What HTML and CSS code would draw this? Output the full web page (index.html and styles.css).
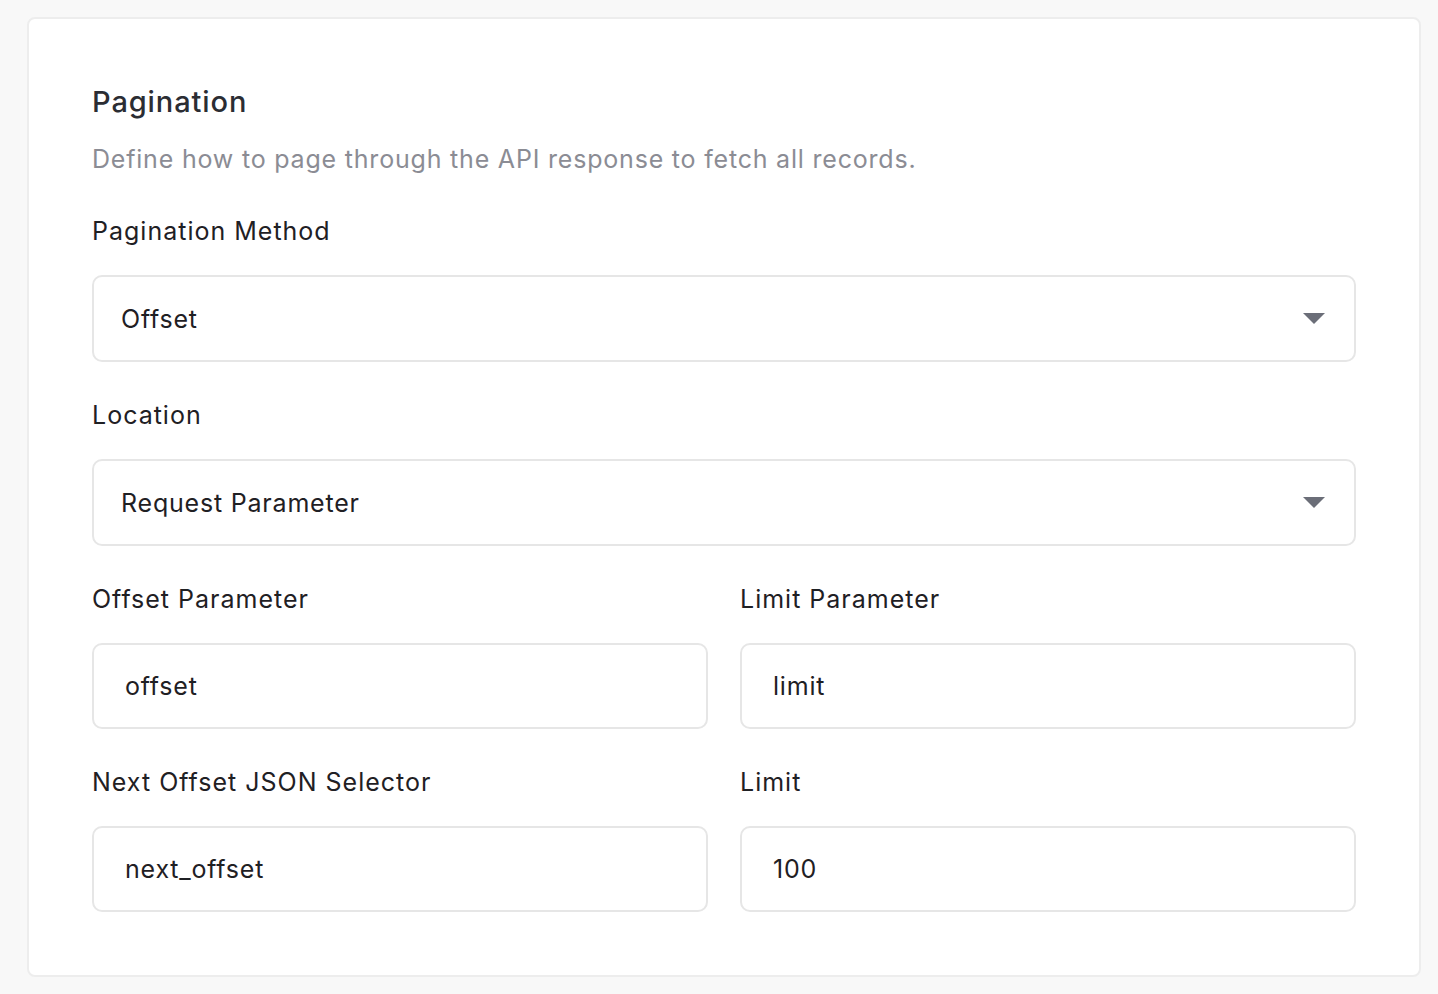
FILE: index.html
```html
<!DOCTYPE html>
<html lang="en">
<head>
<meta charset="utf-8">
<title>Pagination</title>
<link rel="stylesheet" href="styles.css">
</head>
<body>
<div class="page">
  <section class="card">
    <h2 class="title">Pagination</h2>
    <p class="desc">Define how to page through the API response to fetch all records.</p>

    <div class="fields">
      <div class="field">
        <label class="label">Pagination Method</label>
        <div class="select">
          <span class="select-value">Offset</span>
          <svg class="caret" width="22" height="11" viewBox="0 0 22 11"><path d="M0 0 H22 L11 11 Z" fill="#6b6e78"/></svg>
        </div>
      </div>

      <div class="field">
        <label class="label">Location</label>
        <div class="select">
          <span class="select-value">Request Parameter</span>
          <svg class="caret" width="22" height="11" viewBox="0 0 22 11"><path d="M0 0 H22 L11 11 Z" fill="#6b6e78"/></svg>
        </div>
      </div>

      <div class="row">
        <div class="field">
          <label class="label">Offset Parameter</label>
          <input class="input" type="text" value="offset" readonly>
        </div>
        <div class="field">
          <label class="label">Limit Parameter</label>
          <input class="input" type="text" value="limit" readonly>
        </div>
      </div>

      <div class="row">
        <div class="field">
          <label class="label">Next Offset JSON Selector</label>
          <input class="input" type="text" value="next_offset" readonly>
        </div>
        <div class="field">
          <label class="label">Limit</label>
          <input class="input" type="text" value="100" readonly>
        </div>
      </div>
    </div>
  </section>
</div>
</body>
</html>
```

FILE: styles.css
```css
* { box-sizing: border-box; }

html, body {
  margin: 0;
  padding: 0;
  background: #f8f8f8;
  font-family: "Inter", "Noto Sans", sans-serif;
}

.page {
  padding: 17px 17px 18px 27px;
}

.card {
  width: 1394px;
  background: #ffffff;
  border: 2px solid #ededed;
  border-radius: 8px;
  padding: 63px 63px 63px 63px;
}

.title {
  margin: 0;
  font-size: 29px;
  line-height: 40px;
  font-weight: 500;
  letter-spacing: 0.9px;
  color: #2b2d33;
}

.desc {
  margin: 21px 0 0 0;
  font-size: 25px;
  line-height: 32px;
  letter-spacing: 0.8px;
  color: #8b8c94;
}

.fields {
  margin-top: 39px;
  display: flex;
  flex-direction: column;
  gap: 36px;
}

.row {
  display: grid;
  grid-template-columns: 1fr 1fr;
  column-gap: 32px;
}

.field {
  display: flex;
  flex-direction: column;
  gap: 27px;
}

.label {
  font-size: 25px;
  line-height: 34px;
  letter-spacing: 1px;
  color: #1f2024;
}

.select {
  height: 87px;
  border: 2px solid #e6e6e6;
  border-radius: 10px;
  display: flex;
  align-items: center;
  justify-content: space-between;
  padding: 0 29px 0 27px;
}

.select-value {
  font-size: 25px;
  letter-spacing: 0.8px;
  color: #1f2024;
}

.caret { display: block; }

.input {
  width: 100%;
  height: 86px;
  border: 2px solid #e6e6e6;
  border-radius: 10px;
  padding: 0 31px;
  font-family: inherit;
  font-size: 25px;
  letter-spacing: 0.8px;
  color: #1f2024;
  background: #fff;
  outline: none;
}
```
